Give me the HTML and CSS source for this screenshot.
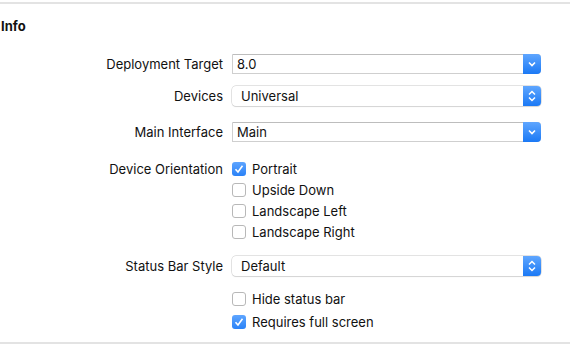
FILE: index.html
```html
<!DOCTYPE html>
<html>
<head>
<meta charset="utf-8">
<link rel="stylesheet" href="styles.css">
</head>
<body>
<div class="panel">
  <div class="heading">Info</div>
  <div class="row r-dt">
    <div class="label">Deployment Target</div>
    <div class="combo"><span class="val">8.0</span><span class="btn"><svg width="10" height="6" viewBox="0 0 10 6"><path d="M2 1.5 L5 4.5 L8 1.5" fill="none" stroke="#fff" stroke-width="1.6"/></svg></span></div>
  </div>
  <div class="row r-dev">
    <div class="label">Devices</div>
    <div class="popup"><span class="val">Universal</span><span class="btn"><svg width="10" height="14" viewBox="0 0 10 14"><path d="M2 5.5 L5 2.5 L8 5.5 M2 8.5 L5 11.5 L8 8.5" fill="none" stroke="#fff" stroke-width="1.5"/></svg></span></div>
  </div>
  <div class="row r-mi">
    <div class="label">Main Interface</div>
    <div class="combo"><span class="val">Main</span><span class="btn"><svg width="10" height="6" viewBox="0 0 10 6"><path d="M2 1.5 L5 4.5 L8 1.5" fill="none" stroke="#fff" stroke-width="1.6"/></svg></span></div>
  </div>
  <div class="row r-do">
    <div class="label">Device Orientation</div>
    <div class="check"><span class="box on"><svg width="14" height="14" viewBox="0 0 14 14"><path d="M3.5 7.2 L6 10 L10.5 3.8" fill="none" stroke="#fff" stroke-width="1.6"/></svg></span>Portrait</div>
  </div>
  <div class="row r-cb">
    <div class="label"></div>
    <div class="check"><span class="box"></span>Upside Down</div>
  </div>
  <div class="row r-cb">
    <div class="label"></div>
    <div class="check"><span class="box"></span>Landscape Left</div>
  </div>
  <div class="row r-cb">
    <div class="label"></div>
    <div class="check"><span class="box"></span>Landscape Right</div>
  </div>
  <div class="row r-sbs">
    <div class="label">Status Bar Style</div>
    <div class="popup"><span class="val">Default</span><span class="btn"><svg width="10" height="14" viewBox="0 0 10 14"><path d="M2 5.5 L5 2.5 L8 5.5 M2 8.5 L5 11.5 L8 8.5" fill="none" stroke="#fff" stroke-width="1.5"/></svg></span></div>
  </div>
  <div class="row r-hide">
    <div class="label"></div>
    <div class="check"><span class="box"></span>Hide status bar</div>
  </div>
  <div class="row r-req">
    <div class="label"></div>
    <div class="check"><span class="box on"><svg width="14" height="14" viewBox="0 0 14 14"><path d="M3.5 7.2 L6 10 L10.5 3.8" fill="none" stroke="#fff" stroke-width="1.6"/></svg></span>Requires full screen</div>
  </div>
</div>
</body>
</html>
```
FILE: styles.css
```css
html, body {
  margin: 0;
  padding: 0;
  background: #fff;
}
body {
  font-family: Inter, "Liberation Sans", Arial, sans-serif;
  font-size: 13px;
  color: #111;
  width: 570px;
  height: 350px;
  overflow: hidden;
}
.panel {
  margin-top: 2px;
  border-top: 2px solid #e3e3e3;
  border-bottom: 2px solid #e3e3e3;
  height: 338px;
  display: flex;
  flex-direction: column;
}
.heading {
  font-weight: bold;
  line-height: 16px;
  margin-top: 14px;
  padding-left: 1px;
}
.row {
  display: flex;
  align-items: center;
  gap: 9px;
}
.label {
  width: 223px;
  text-align: right;
  flex: none;
}
.r-dt { margin-top: 20px; height: 20px; }
.r-dev { margin-top: 12px; height: 20px; }
.r-mi { margin-top: 16px; height: 20px; }
.r-do { margin-top: 18px; height: 18px; }
.r-cb { margin-top: 3px; height: 18px; }
.r-sbs { margin-top: 15px; height: 20px; }
.r-hide { margin-top: 14px; height: 18px; }
.r-req { margin-top: 5px; height: 18px; }

.combo, .popup {
  width: 309px;
  height: 20px;
  box-sizing: border-box;
  display: flex;
  align-items: center;
  background: #fff;
  position: relative;
}
.combo {
  border: 1px solid #cfcfcf;
  border-top-color: #bdbdbd;
  border-right: none;
  border-radius: 0 4px 4px 0;
}
.combo .val { padding-left: 4px; flex: 1; }
.popup {
  border-radius: 4px;
  box-shadow: 0 0 0 0.5px #c8c8c8, 0 1px 1px rgba(0,0,0,0.12);
}
.popup .val { padding-left: 9px; flex: 1; }
.btn {
  width: 18px;
  align-self: stretch;
  background: linear-gradient(#5fa6ff, #1b79f5);
  border-radius: 0 4px 4px 0;
  display: flex;
  align-items: center;
  justify-content: center;
}
.combo .btn { margin: -1px 0; }
.check {
  display: flex;
  align-items: center;
  gap: 6px;
}
.box {
  width: 14px;
  height: 14px;
  box-sizing: border-box;
  border: 1px solid #b8b8b8;
  border-radius: 3px;
  background: #fff;
  display: flex;
}
.box.on {
  border: none;
  background: linear-gradient(#5ea5ff, #2a82f7);
}
```
